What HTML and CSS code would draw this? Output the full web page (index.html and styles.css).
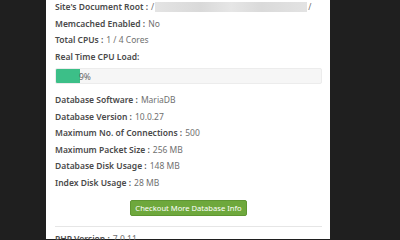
FILE: index.html
```html
<!DOCTYPE html>
<html lang="en">
<head>
    <meta charset="UTF-8">
    <title>Server Info</title>
    <link rel="stylesheet" href="styles.css">
</head>
<body>
    <div class="panel">
        <div class="info-list top-list">
            <div class="row"><span class="label">Site's Document Root :</span> <span class="value">/</span><span class="blur"></span><span class="value">/</span></div>
            <div class="row"><span class="label">Memcached Enabled :</span> <span class="value">No</span></div>
            <div class="row"><span class="label">Total CPUs :</span> <span class="value">1 / 4 Cores</span></div>
            <div class="row"><span class="label">Real Time CPU Load:</span></div>
        </div>
        <div class="progress">
            <div class="progress-fill" style="width: 24px"></div>
            <span class="progress-text">9%</span>
        </div>
        <div class="info-list">
            <div class="row"><span class="label">Database Software :</span> <span class="value">MariaDB</span></div>
            <div class="row"><span class="label">Database Version :</span> <span class="value">10.0.27</span></div>
            <div class="row"><span class="label">Maximum No. of Connections :</span> <span class="value">500</span></div>
            <div class="row"><span class="label">Maximum Packet Size :</span> <span class="value">256 MB</span></div>
            <div class="row"><span class="label">Database Disk Usage :</span> <span class="value">148 MB</span></div>
            <div class="row"><span class="label">Index Disk Usage :</span> <span class="value">28 MB</span></div>
        </div>
        <div class="actions">
            <button class="db-btn">Checkout More Database Info</button>
        </div>
        <hr class="divider">
        <div class="info-list">
            <div class="row"><span class="label">PHP Version :</span> <span class="value">7.0.11</span></div>
        </div>
    </div>
</body>
</html>
```

FILE: styles.css
```css
body {
    margin: 0;
    background-color: #1f1f1f;
    font-family: 'Noto Sans', 'Open Sans', sans-serif;
    height: 240px;
    overflow: hidden;
}
.panel {
    width: 284px;
    margin-left: 46px;
    background-color: #fff;
    padding: 0 8px 0 9px;
    box-sizing: border-box;
    height: 240px;
}
.top-list {
    margin-top: -1px;
}
.row {
    height: 16.5px;
    line-height: 16.5px;
    font-size: 8.5px;
    white-space: nowrap;
    display: flex;
    align-items: center;
}
.label {
    font-weight: 600;
    color: #4a4a4a;
    margin-right: 3px;
}
.value {
    color: #707070;
}
.blur {
    display: inline-block;
    width: 152px;
    height: 10px;
    margin: 0 1px;
    background: linear-gradient(90deg, #e4e4e4, #d9d9d9 30%, #e6e6e6 50%, #dadada 70%, #e3e3e3);
}
.progress {
    margin-top: 3px;
    margin-bottom: 8px;
    height: 16px;
    background-color: #f6f6f6;
    border: 1px solid #ececec;
    border-radius: 2px;
    box-sizing: border-box;
    display: flex;
    align-items: center;
    overflow: hidden;
}
.progress-fill {
    height: 100%;
    background-color: #3cbf88;
}
.progress-text {
    font-size: 8.5px;
    color: #666;
    margin-left: -1px;
}
.actions {
    display: flex;
    justify-content: center;
    margin-top: 9px;
}
.db-btn {
    background-color: #6ea83c;
    color: #fff;
    border: 1px solid #5f9632;
    border-radius: 2px;
    font-family: inherit;
    font-size: 7.6px;
    height: 16px;
    padding: 0 4px;
    line-height: 14px;
    white-space: nowrap;
}
.divider {
    border: none;
    border-top: 1px solid #e6e6e6;
    margin: 10px 0 4px;
}
```
